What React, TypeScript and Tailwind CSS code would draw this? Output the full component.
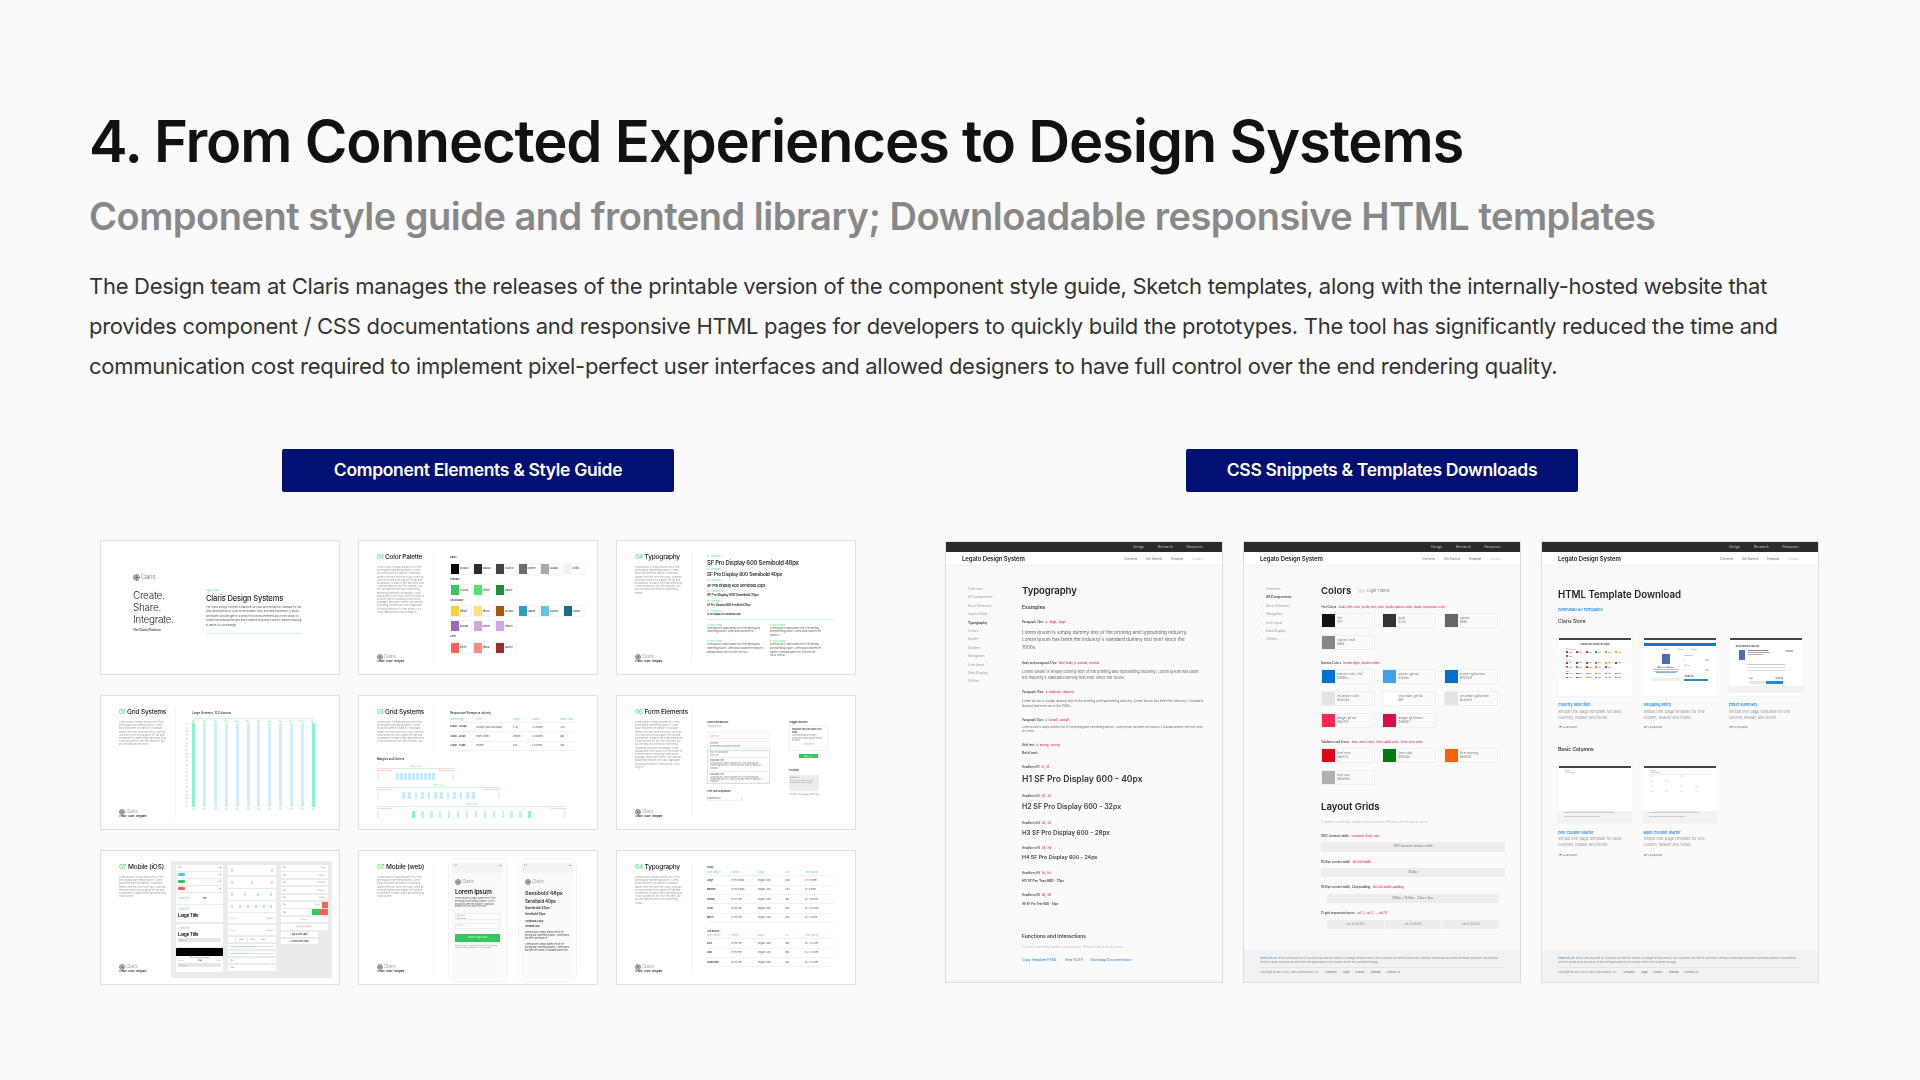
import type { ReactNode } from "react"

const LOREM =
  "Lorem Ipsum is simply dummy text of the printing and typesetting industry. Lorem Ipsum has been the industry's standard dummy text ever since the 1500s, when an unknown printer took a galley of type and scrambled it to make a type specimen book. It has survived not only five centuries, but also the leap into electronic typesetting, remaining essentially unchanged. It was popularised in the 1960s with the release of Letraset sheets containing Lorem Ipsum passages, and more recently with desktop publishing software like Aldus PageMaker including versions of Lorem Ipsum. It is a long established fact that a reader will be distracted by the readable content of a page when looking at its layout."

function ClarisLogo({ large }: { large?: boolean }) {
  return (
    <div className={large ? "flex items-center gap-[1px] text-[5.5px] leading-[7px] font-light text-[#666]" : "flex items-center gap-[1px] text-[4.5px] leading-[6px] font-light text-[#777]"}>
      <svg viewBox="0 0 12 12" className={large ? "w-[7px] h-[7px]" : "w-[6px] h-[6px]"} fill="none" stroke="#555" strokeWidth="1.2">
        <circle cx="6" cy="6" r="5" />
        <path d="M6 1v10M1 6h10M3 2.5c2 2 2 5 0 7M9 2.5c-2 2-2 5 0 7" />
      </svg>
      Claris
    </div>
  )
}

function Rail({ num, title, chars, logo = true, border = true }: { num: string; title: string; chars: number; logo?: boolean; border?: boolean }) {
  return (
    <div className={border ? "w-[75px] shrink-0 h-full flex flex-col pl-[18px] pr-[8px] border-r border-[#f3f3f3]" : "w-[75px] shrink-0 h-full flex flex-col pl-[18px] pr-[8px]"}>
      <div className="mt-[1px] text-[6.5px] leading-[8px] font-medium whitespace-nowrap text-[#222] tracking-[-0.2px]">
        <span className="text-[#5fdc7c]">{num}</span> {title}
      </div>
      <p className="mt-[5px] text-[2.3px] leading-[3.2px] text-[#999]">{LOREM.slice(0, chars)}</p>
      {logo && (
        <div className="mt-auto">
          <ClarisLogo />
          <div className="text-[2.4px] leading-[3px] font-semibold text-[#222]">Create. Share. Integrate.</div>
        </div>
      )}
    </div>
  )
}

function Thumb({ children, className }: { children: ReactNode; className?: string }) {
  return (
    <div className="w-[240px] h-[135px] border border-[#e0e0e0] bg-white overflow-hidden">
      <div className={`h-full blur-[0.35px] ${className ?? "flex py-[11px]"}`}>{children}</div>
    </div>
  )
}

function CoverThumb() {
  return (
    <Thumb className="flex items-start pl-[32px] pt-[33px]">
      <div className="w-[73px] shrink-0">
        <ClarisLogo large />
        <div className="mt-[9px] text-[10px] leading-[11.8px] font-light text-[#222] tracking-[-0.3px]">
          Create.
          <br />
          Share.
          <br />
          Integrate.
        </div>
        <div className="mt-[3px] text-[3px] leading-[4px] font-semibold text-[#333]">The Claris Platform</div>
      </div>
      <div className="w-[96px] mt-[15px]">
        <div className="text-[2.4px] leading-[3px] text-[#5fdc7c]">Light mode</div>
        <div className="mt-[2px] text-[7.6px] leading-[9px] font-medium text-[#222] tracking-[-0.2px] whitespace-nowrap">Claris Design Systems</div>
        <p className="mt-[3px] text-[2.55px] leading-[4.4px] text-[#555]">
          The Claris Design Systems establishes a visual and interaction standard for our web-based products. Built on the modern front-end Web framework, it allows developers and designers to browse functional elements and styles library to create functional prototypes and complete responsive layouts without requiring in-depth CSS knowledge.
        </p>
        <div className="mt-[5px] h-[1px] bg-[#d5f5dd]" />
      </div>
    </Thumb>
  )
}

function Swatches({ colors }: { colors: string[] }) {
  return (
    <div className="flex gap-[0.5px]">
      {colors.map((c, i) => (
        <div key={i} className="w-[22px] h-[12px] flex items-center border border-[#f6f6f6]">
          <div className="w-[8px] h-full shrink-0" style={{ backgroundColor: c }} />
          <span className="ml-[1px] text-[1.9px] font-semibold text-[#444]">{c}</span>
        </div>
      ))}
    </div>
  )
}

function SwatchLabel({ children }: { children: ReactNode }) {
  return <div className="mt-[3px] mb-[3.3px] text-[2.6px] leading-[3px] font-semibold text-[#333]">{children}</div>
}

function ColorThumb() {
  return (
    <Thumb>
      <Rail num="01" title="Color Palette" chars={620} />
      <div className="pl-[16px] pt-[1.5px]">
        <SwatchLabel>Basic</SwatchLabel>
        <Swatches colors={["#000000", "#2b2b2b", "#444444", "#6e6e6e", "#aaaaaa", "#f2f2f6"]} />
        <SwatchLabel>Primary</SwatchLabel>
        <Swatches colors={["#34c759", "#4fe56f", "#1d8f3c"]} />
        <SwatchLabel>Secondary</SwatchLabel>
        <Swatches colors={["#ffd02f", "#ffe27a", "#a35b00", "#2ba0bf", "#5ac8e0", "#1b6a86"]} />
        <div className="mt-[3px]">
          <Swatches colors={["#9a6ab8", "#cfa6e6", "#cfa6e6"]} />
        </div>
        <SwatchLabel>Alert</SwatchLabel>
        <Swatches colors={["#ff5f57", "#ff8a80", "#9b2f2f"]} />
      </div>
    </Thumb>
  )
}

function TypeRow({ label, children, className }: { label: string; children: ReactNode; className: string }) {
  return (
    <div className="mb-[1.6px]">
      <div className="text-[2.2px] leading-[3px] text-[#5fdc7c]">{label}</div>
      <div className={`mt-[0.5px] font-semibold text-[#333] whitespace-nowrap tracking-[-0.2px] ${className}`}>{children}</div>
    </div>
  )
}

function TypographyThumb() {
  return (
    <Thumb>
      <Rail num="04" title="Typography" chars={340} />
      <div className="pl-[15px] pt-[3.5px] w-[150px]">
        <TypeRow label="h1, .headline-1" className="text-[5.9px] leading-[7px]">SF Pro Display 600 Semibold 48px</TypeRow>
        <TypeRow label="h2, .headline-2" className="text-[4.9px] leading-[6.5px]">SF Pro Display 600 Semibold 40px</TypeRow>
        <TypeRow label="h3, .headline-3" className="text-[3.9px] leading-[5.5px]">SF Pro Display 600 Semibold 32px</TypeRow>
        <TypeRow label="h4, .headline-4" className="text-[3.5px] leading-[5px]">SF Pro Display 600 Semibold 28px</TypeRow>
        <TypeRow label="h5, .headline-5" className="text-[3px] leading-[5px]">SF Pro Display 600 Semibold 24px</TypeRow>
        <TypeRow label="h6, .headline-6" className="text-[2.4px] leading-[3.5px]">SF Pro Display 600 Semibold 20px</TypeRow>
        <div className="h-[1px] bg-[#d5f5dd] w-[127px]" />
        <div className="grid grid-cols-[63px_56px] gap-y-[3px] mt-[4px]">
          {[LOREM.slice(0, 100), LOREM.slice(0, 110), LOREM.slice(0, 150), LOREM.slice(0, 160)].map((t, i) => (
            <div key={i} className="pr-[4px]">
              <div className="text-[2px] leading-[3px] text-[#5fdc7c]">p, .body-normal</div>
              <p className="text-[2.1px] leading-[3.6px] text-[#555]">{t}</p>
            </div>
          ))}
        </div>
      </div>
    </Thumb>
  )
}

function GridColumnsThumb() {
  const cols = Array.from({ length: 12 }, (_, i) => i)
  return (
    <Thumb>
      <Rail num="01" title="Grid Systems" chars={320} />
      <div className="pl-[10px] w-[164px]">
        <div className="pl-[6px] pt-[4px] text-[3px] leading-[4px] font-semibold text-[#333]">Large Screens, 12 Columns</div>
        <div className="ml-[6px] mt-[3px] w-[123px] border-t border-[#d5f5dd] h-[2px]" />
        <div className="ml-[6px] w-[123px] flex justify-between text-[1.8px] leading-[3px] text-[#5fdc7c]">
          {cols.map((c) => (
            <span key={c}>54px</span>
          ))}
        </div>
        <div className="flex">
          <div className="w-[6px] flex flex-col justify-between h-[84px] text-[1.7px] text-[#888]">
            {Array.from({ length: 23 }, (_, i) => (
              <span key={i} className="leading-[2px]">32</span>
            ))}
          </div>
          <div className="w-[123px] h-[84px] flex justify-between">
            {cols.map((c) => (
              <div key={c} className={c === 0 || c === 11 ? "w-[3px] h-full bg-[#86f5d3]" : "w-[3px] h-full bg-[#cdefff]"} />
            ))}
          </div>
        </div>
        <div className="ml-[6px] w-[123px] flex justify-between text-[1.8px] leading-[4px] text-[#5fdc7c]">
          {cols.map((c) => (
            <span key={c}>1/12</span>
          ))}
        </div>
      </div>
    </Thumb>
  )
}

function Gutter({ width, side, bars, edge, label }: { width: string; side: string; bars: number; edge?: boolean; label: string }) {
  return (
    <div className={`${width} mt-[3.6px]`}>
      <div className="text-center text-[1.8px] leading-[2.4px] text-[#5fdc7c]">{label}</div>
      <div className="flex h-[1px] mt-[1px]">
        <div className={`${side} bg-[#fcdcdc]`} />
        <div className="flex-1 bg-[#d5f5dd]" />
        <div className={`${side} bg-[#fcdcdc]`} />
      </div>
      <div className="flex justify-between text-[1.7px] leading-[3px] text-[#ff8a80]">
        <span>Responsive margin</span>
        <span>Responsive margin</span>
      </div>
      <div className="flex items-stretch h-[7px] mt-[1px]">
        <div className="w-[2px] bg-[#eeeeee]" />
        <div className={`${side} flex-none`} />
        <div className="flex-1 flex justify-between">
          {Array.from({ length: bars }, (_, i) => (
            <div key={i} className={edge && (i === 0 || i === bars - 1) ? "w-[2.6px] bg-[#86f5d3]" : "w-[2.6px] bg-[#c6ecff]"} />
          ))}
        </div>
        <div className={`${side} flex-none`} />
        <div className="w-[2px] bg-[#eeeeee]" />
      </div>
    </div>
  )
}

function MiniTable({ head, rows, cols }: { head: string[]; rows: string[][]; cols: string }) {
  return (
    <div>
      <div className={`grid ${cols} text-[1.9px] leading-[3px] text-[#5fdc7c] border-b border-[#f3f3f3] pb-[1px]`}>
        {head.map((h) => (
          <span key={h}>{h}</span>
        ))}
      </div>
      {rows.map((r, i) => (
        <div key={i} className={`grid ${cols} items-center h-[9.3px] text-[2px] text-[#555] border-b border-[#f3f3f3]`}>
          {r.map((c, j) => (
            <span key={j} className={j === 0 ? "font-semibold text-[#333] text-[2.2px]" : ""}>{c}</span>
          ))}
        </div>
      ))}
    </div>
  )
}

function GridResponsiveThumb() {
  return (
    <Thumb className="flex flex-col py-[11px]">
      <div className="flex h-[46px] shrink-0">
        <Rail num="01" title="Grid Systems" chars={290} logo={false} />
        <div className="pl-[16px] pt-[4px] w-[164px]">
          <div className="text-[2.8px] leading-[4px] font-semibold text-[#333]">Responsive Viewports (shorti)</div>
          <div className="mt-[3px] w-[127px]">
            <MiniTable
              cols="grid-cols-[26px_37px_19px_28px_1fr]"
              head={["Viewport range", "Screen", "Margins", "Columns", "Gutters / Gaps"]}
              rows={[
                ["980px - 1280px", "Desktop (1366x) and laptop", "32 px", "12 Columns", "24px"],
                ["600px - 979px", "Tablet (Tablet)", "Medium", "12 Columns", "16px"],
                ["320px - 599px", "Handset", "8 px", "6 Columns", "16px"],
              ]}
            />
          </div>
        </div>
      </div>
      <div className="pl-[18px] mt-[4px] text-[2.8px] leading-[4px] font-semibold text-[#333]">Margins and Gutters</div>
      <div className="pl-[18px]">
        <Gutter width="w-[77px]" side="w-[17px]" bars={10} label="1020 px wide" />
        <Gutter width="w-[123px]" side="w-[23px]" bars={12} label="1440 px wide" />
        <Gutter width="w-[189px]" side="w-[33px]" bars={14} edge label="1920 px wide" />
      </div>
    </Thumb>
  )
}

function FormThumb() {
  return (
    <Thumb>
      <Rail num="06" title="Form Elements" chars={590} />
      <div className="pl-[15px] pt-[14px] w-[73px] shrink-0 box-content">
        <div className="w-[63px]">
          <div className="text-[2.6px] leading-[3px] font-semibold text-[#333]">Select dropdown</div>
          <div className="mt-[0.7px] text-[2px] leading-[3px] text-[#5fdc7c]">Component link</div>
          <div className="mt-[4px] h-[7.5px] border border-[#f2f2f2] px-[2px] text-[2px] leading-[6px] text-[#aaa]">Place text</div>
          <div className="mt-[2px] h-[8px] border border-[#f2f2f2] px-[2px] text-[1.9px] leading-[2.6px] text-[#777]">
            Selected
            <br />
            Selected text and option selected
          </div>
          <div className="mt-[1px] h-[34px] border border-[#c4f0cf] px-[1px] text-[1.9px] leading-[2.4px] text-[#888]">
            <div className="border-b border-[#eeeeee] px-[1px] pb-[1px]">Body text dropdown<br />Body Text</div>
            <div className="border-b border-[#eeeeee] px-[1px] py-[1.5px]"><b>Dropdown Title</b><br />{LOREM.slice(0, 120)}</div>
            <div className="px-[1px] py-[1.5px]"><b>Dropdown Title</b><br />{LOREM.slice(0, 120)}</div>
          </div>
          <div className="mt-[5.5px] text-[2.6px] leading-[3px] font-semibold text-[#333]">Text link dropdown</div>
          <div className="mt-[4px] w-[35px] border-b border-[#f2f2f2] text-[2px] leading-[3.5px] text-[#666] flex justify-between">Dropdown link <span>▾</span></div>
        </div>
      </div>
      <div className="pl-[9px] pt-[14px] w-[48px]">
        <div className="text-[2.6px] leading-[3px] font-semibold text-[#333]">Toggle anyone</div>
        <div className="mt-[1px] h-[26px] w-[39px] border border-[#f2f2f2] p-[2px] text-[1.9px] leading-[2.6px] text-[#888]">
          <div className="font-semibold text-[#444]">Dropdown Text Dark above Dark mode</div>
          <p className="mt-[1px]">Lorem ipsum dolor sit amet, consectetur adipiscing elit sed do eiusmod</p>
          <div className="mt-[1px] text-center text-[#5fdc7c]">Learn more</div>
        </div>
        <div className="mt-[3px] ml-[9.5px] w-[19px] h-[4.4px] bg-[#34c759] text-center text-[1.6px] leading-[4.4px] text-white">Add to cart</div>
        <div className="mt-[11px] text-[2.6px] leading-[3px] font-semibold text-[#333]">Tooltips</div>
        <div className="mt-[3px] w-[30px] h-[16px] bg-[#ededed] p-[1px] text-[1.8px] leading-[2.4px] text-[#888]">
          <b>Label text</b>
          <br />
          Lorem ipsum dolor sit amet consectetur adipiscing elit
        </div>
        <div className="mt-[1.5px] flex items-center gap-[1px] text-[1.8px] text-[#777] whitespace-nowrap">
          <div className="w-[2.5px] h-[2.5px] border border-[#ddd]" />SF Pro Text Regular, #333, 10px
        </div>
      </div>
    </Thumb>
  )
}

function IosRow({ left, right, pill, className }: { left: string; right?: string; pill?: string; className?: string }) {
  return (
    <div className={`flex justify-between items-center bg-white px-[2px] text-[1.8px] text-[#777] ${className ?? "h-[5.6px]"}`}>
      {pill ? <span className={`w-[6.5px] h-[3px] rounded-[1px] ${pill}`} /> : <span>{left}</span>}
      <span className="text-[#888]">{right}</span>
    </div>
  )
}

function GreenRow({ marks, h }: { marks: number; h: string }) {
  return (
    <div className={`flex justify-between items-center bg-white px-[3px] ${h}`}>
      {Array.from({ length: marks }, (_, i) => (
        <div key={i} className="w-[2px] h-[2.6px] border-[0.5px] border-[#bdeecb]" />
      ))}
    </div>
  )
}

function MobileIosThumb() {
  return (
    <Thumb className="flex pt-[11px]">
      <div className="h-[111px] shrink-0">
        <Rail num="07" title="Mobile (iOS)" chars={260} border={false} />
      </div>
      <div className="-mt-[1px] h-[117px] w-[161px] ml-[-5px] bg-[#ebebeb] flex gap-[5px] pl-[5px] pt-[4px]">
        <div className="w-[47px] flex flex-col gap-[1.4px]">
          <IosRow left="9:41" right="▪▪ ▮" />
          <IosRow left="" pill="bg-[#5ac8e0]" right="▪▪ ▮" />
          <IosRow left="" pill="bg-[#34c759]" right="▪▪ ▮" />
          <IosRow left="" pill="bg-[#ff5f57]" right="▪▪ ▮" />
          <div className="mt-[0.5px] h-[10.5px] bg-white flex justify-between items-center px-[2px] text-[1.9px] text-[#5fdc7c]">
            <span>‹ Parent Title</span><span className="text-[#333] font-semibold">Title</span><span>+</span>
          </div>
          <div className="h-[17px] bg-white px-[2px] pt-[3px] text-[1.9px] text-[#5fdc7c]">
            <div className="flex justify-between"><span>‹ Parent Title</span><span>+</span></div>
            <div className="mt-[2px] text-[4.4px] leading-[5px] font-bold text-[#222] tracking-[-0.2px]">Large Title</div>
          </div>
          <div className="h-[23px] bg-white px-[2px] pt-[3px] text-[1.9px] text-[#5fdc7c]">
            <div className="flex justify-between"><span>‹ Parent Title</span><span>+</span></div>
            <div className="mt-[2px] text-[4.4px] leading-[5px] font-bold text-[#222] tracking-[-0.2px]">Large Title</div>
            <div className="mt-[1px] h-[4px] bg-[#e6e6e6] text-[1.8px] leading-[4px] text-[#999] pl-[1px]">Q Search</div>
          </div>
          <div className="h-[8px] bg-black rounded-t-[1px]" />
          <div className="-mt-[1.4px] h-[16px] bg-white px-[2px] text-[1.8px] text-[#5fdc7c]">
            <div className="text-center text-[1.6px] leading-[3px] text-[#555]">This is a system message</div>
            <div className="flex justify-between leading-[3px]"><span>Cancel</span><span className="text-[#333] font-semibold">Title</span><span>Done</span></div>
            <div className="mt-[1px] h-[4px] bg-[#e6e6e6] text-[#999] leading-[4px] pl-[1px]">Q Search</div>
          </div>
        </div>
        <div className="w-[47.5px] flex flex-col gap-[1.6px]">
          <GreenRow marks={2} h="h-[10.5px]" />
          <GreenRow marks={3} h="h-[10.5px]" />
          <GreenRow marks={4} h="h-[10.5px]" />
          <GreenRow marks={6} h="h-[10.5px]" />
          <IosRow left="Action 1" right="Action 2" className="h-[10px] !text-[#5fdc7c]" />
          <IosRow left="Action 1" right="Action 3" className="h-[10px] !text-[#5fdc7c]" />
          <div className="h-[5.5px] bg-white flex items-center justify-center text-[1.7px] text-[#555]">
            <span className="px-[3px] border-x border-[#ddd]">Label</span><span className="px-[3px]">Label</span><span className="px-[3px]">Label</span>
          </div>
          <div className="h-[5.5px] bg-white flex items-center px-[2px]"><div className="w-[26px] h-[0.7px] bg-[#a5e8b7]" /><div className="flex-1 h-[0.7px] bg-[#ddd]" /></div>
          <div className="h-[5.5px] bg-white flex items-center px-[2px] gap-[1px]"><div className="w-[20px] h-[0.7px] bg-[#a5e8b7]" /><div className="flex-1 h-[0.7px] bg-[#ddd]" /></div>
          <IosRow left="Title" right="− +" />
          <IosRow left="Field" right="▪" />
        </div>
        <div className="w-[47px] flex flex-col gap-[1.8px]">
          <IosRow left="Title" right="Detail" />
          <IosRow left="Title" right="Detail ›" />
          <IosRow left="Title" right="Detail ○" />
          <IosRow left="Title" right="Detail ✓" />
          <IosRow left="Title" right="Detail ›" />
          <div className="h-[5.6px] flex bg-white items-center pl-[2px] text-[1.8px] text-[#777]">
            <span className="flex-1">Title</span>
            <span className="mr-[2px] text-[#999]">Detail</span>
            <span className="w-[6px] h-full bg-[#ff5f57]" />
          </div>
          <div className="h-[5.6px] flex bg-white items-center pl-[2px] text-[1.8px] text-[#777]">
            <span className="flex-1">Title</span>
            <span className="w-[8px] h-full bg-[#34c759]" />
            <span className="w-[8px] h-full bg-[#ff5f57]" />
          </div>
          <div className="h-[5.6px] bg-white text-center text-[1.8px] leading-[5.6px] text-[#5fdc7c]">Button</div>
          <div className="h-[5.6px] bg-white text-center text-[1.8px] leading-[5.6px] text-[#ff5f57]">Destructive Button</div>
          <div className="h-[5.6px] w-[37px] bg-white text-center text-[1.9px] leading-[5.6px] font-medium text-[#333]">▪ Sign in with Apple</div>
          <div className="h-[5.6px] w-[37px] bg-white text-center text-[1.9px] leading-[5.6px] font-medium text-[#333]">▪ Continue with Apple</div>
        </div>
      </div>
    </Thumb>
  )
}

function Phone({ children }: { children: ReactNode }) {
  return (
    <div className="w-[59px] h-[124px] border border-[#f2f2f2] rounded-[8px] px-[3px] pt-[4px]">
      <div className="bg-[#fafafa] h-[116px]">
        <div className="h-[10px] bg-[#f3f3f3] flex justify-between px-[2px] pt-[1px] text-[1.6px] text-[#888]">
          <span>9:41</span><span>▪▪ ▮</span>
        </div>
        <div className="px-[3px] pt-[6px]">{children}</div>
      </div>
    </div>
  )
}

function MobileWebThumb() {
  return (
    <Thumb className="flex pt-[7px]">
      <div className="pt-[4px] h-[115px] shrink-0">
        <Rail num="07" title="Mobile (web)" chars={260} />
      </div>
      <div className="flex gap-[11px] pl-[14px]">
        <Phone>
          <ClarisLogo />
          <div className="mt-[3px] text-[6.2px] leading-[8px] font-semibold text-[#222] tracking-[-0.2px] whitespace-nowrap">Lorem Ipsum</div>
          <p className="mt-[2px] text-[2.1px] leading-[2.8px] text-[#555]">{LOREM.slice(0, 150)}</p>
          <div className="mt-[4px] h-[6.5px] border border-[#eeeeee] bg-white text-[1.7px] leading-[2.4px] text-[#777] px-[1px]">Label text<br />Placeholder</div>
          <div className="mt-[3px] h-[6.5px] border border-[#eeeeee] bg-white text-[1.7px] leading-[2.4px] text-[#999] px-[1px]">Label text</div>
          <div className="mt-[5px] h-[7.5px] bg-[#34c759] text-center text-[2px] leading-[7.5px] text-[#d8f5df]">Primary Large Button</div>
          <p className="mt-[2px] text-[1.8px] leading-[2.4px] text-[#888]">{LOREM.slice(0, 90)}</p>
        </Phone>
        <Phone>
          <ClarisLogo />
          <div className="mt-[4px] font-semibold text-[#333] whitespace-nowrap tracking-[-0.1px]">
            <div className="text-[5.4px] leading-[8px]">Semibold 48px</div>
            <div className="mt-[1px] text-[4.4px] leading-[7px]">Semibold 40px</div>
            <div className="text-[3.6px] leading-[6.5px]">Semibold 32px</div>
            <div className="text-[3px] leading-[6.5px]">Semibold 28px</div>
            <div className="text-[2.7px] leading-[6px]">Semibold 24px</div>
            <div className="text-[2.2px] leading-[6px]">Semibold 20px</div>
          </div>
          <p className="mt-[1px] text-[2px] leading-[2.8px] text-[#444]">{LOREM.slice(0, 110)}</p>
          <p className="mt-[4px] text-[2px] leading-[2.8px] text-[#444]">{LOREM.slice(0, 130)}</p>
        </Phone>
      </div>
    </Thumb>
  )
}

function TypeTableThumb() {
  const cols = "grid-cols-[24px_27px_27px_20px_1fr]"
  return (
    <Thumb>
      <Rail num="04" title="Typography" chars={340} />
      <div className="pl-[15px] pt-[4.5px] w-[142px]">
        <div className="text-[2.6px] leading-[3px] font-semibold text-[#333]">Body</div>
        <div className="mt-[2px]">
          <MiniTable
            cols={cols}
            head={["Scale Category", "Typeface", "Weight", "Size", "Letter Spacing"]}
            rows={[
              ["Large", "SF Pro Display", "Regular (400)", "20px", "0.1° 0.015em"],
              ["Medium", "SF Pro Display", "Regular (400)", "20px", "0.1° 0.01em"],
              ["Normal", "SF Pro Text", "Regular (400)", "16px", "16 / 1.2px(em)"],
              ["Small", "SF Pro Text", "Regular (400)", "14px", "16 / 1.4(20)em"],
              ["Mirror", "SF Pro Text", "Regular (400)", "12px", "16 / 1.2(8)em"],
            ]}
          />
        </div>
        <div className="mt-[7px] text-[2.6px] leading-[3px] font-semibold text-[#333]">Attributes</div>
        <div className="mt-[1.5px]">
          <MiniTable
            cols={cols}
            head={["Scale Category", "Typeface", "Weight", "Size", "Letter Spacing"]}
            rows={[
              ["Bold", "SF Pro Text", "Regular (400)", "14px", "16 / 1.2(20)em"],
              ["Italic", "SF Pro Text", "Regular (400)", "14px", "16 / 1.2(20)em"],
              ["Underlined", "SF Pro Text", "Regular (400)", "14px", "16 / 1.2(20)em"],
            ]}
          />
        </div>
      </div>
    </Thumb>
  )
}

function ScreenHeader() {
  return (
    <div className="shrink-0 blur-[0.2px]">
      <div className="h-[10.5px] bg-[#2b2b2b] flex justify-end items-center gap-[14px] pr-[19px] text-[3.3px] text-[#ccc]">
        <span>Design</span>
        <span>Research</span>
        <span>Resources</span>
      </div>
      <div className="h-[12.5px] bg-white flex items-center pl-[16px] pr-[19px] shadow-[0_1px_1px_#f3f3f3]">
        <div className="text-[6px] font-semibold text-[#222] whitespace-nowrap tracking-[-0.1px]">Legato Design System</div>
        <div className="ml-auto flex gap-[9px] text-[2.9px] text-[#666]">
          <span>Overview</span>
          <span>Get Started</span>
          <span>Template</span>
          <span className="text-[#bbb]">Contact</span>
        </div>
      </div>
    </div>
  )
}

function SideNav({ items, active, carets, width }: { items: string[]; active: string; carets: string[]; width: string }) {
  return (
    <div className={`${width} shrink-0 pl-[22px] text-[3.3px] leading-[8.4px] text-[#999] blur-[0.2px]`}>
      {items.map((it) => (
        <div key={it} className={it === active ? "relative whitespace-nowrap font-semibold text-[#333]" : "relative whitespace-nowrap"}>
          {carets.includes(it) && <span className="absolute -left-[5px] text-[#bbb]">›</span>}
          {it}
        </div>
      ))}
    </div>
  )
}

function Spec({ label, code, children }: { label: string; code: string; children: ReactNode }) {
  return (
    <div>
      <div className="mt-[9.2px] mb-[4.4px] text-[2.8px] leading-[4px] font-semibold text-[#444] whitespace-nowrap">
        {label} <span className="ml-[1px] text-[#f0306e]">{code}</span>
      </div>
      {children}
    </div>
  )
}

function TypographyScreen() {
  return (
    <Screen>
      <div className="flex flex-1 pt-[20px]">
        <SideNav
          width="w-[76px]"
          active="Typography"
          carets={["Basic Elements", "Navigation", "User Input", "Data Display", "Utilities"]}
          items={["Overview", "All Components", "Basic Elements", "Layout Grids", "Typography", "Colors", "Border", "Dividers", "Navigation", "User Input", "Data Display", "Utilities"]}
        />
        <div className="w-[182px] blur-[0.25px]">
          <div className="text-[9.6px] leading-[12px] font-semibold text-[#222] tracking-[-0.1px]">Typography</div>
          <div className="mt-[7px] text-[5px] leading-[7px] font-semibold text-[#444]">Examples</div>
          <Spec label="Paragraph 21px:" code="p, .large, .large">
            <p className="text-[4.7px] leading-[7.7px] text-[#666] whitespace-nowrap">
              Lorem Ipsum is simply dummy text of the printing and typesetting industry.
              <br />
              Lorem Ipsum has been the industry's standard dummy text ever since the
              <br />
              1500s.
            </p>
          </Spec>
          <Spec label="Body and paragraph 17px:" code="html, body, p .normal, .normal">
            <p className="text-[3.82px] leading-[6px] text-[#666]">Lorem Ipsum is simply dummy text of the printing and typesetting industry. Lorem Ipsum has been the industry's standard dummy text ever since the 1500s.</p>
          </Spec>
          <Spec label="Paragraph 14px:" code="p .reduced, .reduced">
            <p className="text-[3.15px] leading-[5px] text-[#666]">Lorem Ipsum is simply dummy text of the printing and typesetting industry. Lorem Ipsum has been the industry's standard dummy text ever since the 1500s.</p>
          </Spec>
          <Spec label="Paragraph 12px:" code="p .xsmall, .xsmall">
            <p className="text-[2.65px] leading-[3.6px] text-[#666]">Lorem Ipsum is simply dummy text of the printing and typesetting industry. Lorem Ipsum has been the industry's standard dummy text ever since the 1500s.</p>
          </Spec>
          <Spec label="Bold text:" code="b, strong, .strong">
            <div className="text-[3.6px] leading-[5px] font-semibold text-[#555]">Bold text.</div>
          </Spec>
          <Spec label="Headlines H1" code="h1, .h1">
            <div className="text-[8.6px] leading-[11px] font-semibold text-[#333] whitespace-nowrap">H1 SF Pro Display 600 - 40px</div>
          </Spec>
          <Spec label="Headlines H2" code="h2, .h2">
            <div className="text-[7px] leading-[9px] font-semibold text-[#444] whitespace-nowrap">H2 SF Pro Display 600 - 32px</div>
          </Spec>
          <Spec label="Headlines H3" code="h3, .h3">
            <div className="text-[6.2px] leading-[8px] font-semibold text-[#444] whitespace-nowrap">H3 SF Pro Display 600 - 28px</div>
          </Spec>
          <Spec label="Headlines H4" code="h4, .h4">
            <div className="text-[5.3px] leading-[7px] font-semibold text-[#444] whitespace-nowrap">H4 SF Pro Display 600 - 24px</div>
          </Spec>
          <Spec label="Headlines H5" code="h5, .h5">
            <div className="text-[3.4px] leading-[5px] font-semibold text-[#444] whitespace-nowrap">H5 SF Pro Text 600 - 17px</div>
          </Spec>
          <Spec label="Headlines H6" code="h6, .h6">
            <div className="text-[2.9px] leading-[4px] font-semibold text-[#444] whitespace-nowrap">H6 SF Pro Text 600 - 14px</div>
          </Spec>
          <div className="mt-[27px] text-[5px] leading-[7px] font-semibold text-[#444]">Functions and Interactions</div>
          <div className="mt-[5px] text-[3.4px] leading-[5px] text-[#bbb]">Content currently under construction. Please check back soon.</div>
          <div className="mt-[8.7px] flex gap-[8px] text-[3.4px] leading-[5px] text-[#0f79d6] whitespace-nowrap">
            <span>Copy Template HTML</span>
            <span>View SCSS</span>
            <span>Bootstrap Documentation</span>
          </div>
        </div>
      </div>
    </Screen>
  )
}

function Tile({ color, name, hex }: { color: string; name: string; hex: string }) {
  return (
    <div className="w-[54px] h-[15.4px] flex border border-[#f0f0f0]">
      <div className="w-[13px] h-full shrink-0" style={{ backgroundColor: color }} />
      <div className="pl-[2px] pt-[2px] text-[2.9px] leading-[4.6px] text-[#777] whitespace-nowrap">
        {name}
        <br />
        {hex}
      </div>
    </div>
  )
}

function TileLabel({ label, code }: { label: string; code: string }) {
  return (
    <div className="text-[2.8px] leading-[4px] font-semibold text-[#444] whitespace-nowrap">
      {label} <span className="ml-[1px] text-[#f0306e]">{code}</span>
    </div>
  )
}

function GridBar({ children, className }: { children: ReactNode; className: string }) {
  return <div className={`mt-[4.5px] h-[9.3px] bg-[#ededed] text-center text-[2.8px] leading-[9.3px] text-[#777] ${className}`}>{children}</div>
}

function ColorsScreen() {
  const tiles = "grid grid-cols-[54px_54px_54px] gap-x-[7.4px] gap-y-[6.6px] mt-[3.7px]"
  return (
    <Screen footer>
      <div className="flex flex-1 pt-[20px]">
        <SideNav
          width="w-[77px]"
          active="All Components"
          carets={["Basic Elements", "Navigation", "User Input", "Data Display", "Utilities"]}
          items={["Overview", "All Components", "Basic Elements", "Navigation", "User Input", "Data Display", "Utilities"]}
        />
        <div className="w-[184px] blur-[0.25px]">
          <div className="flex items-center">
            <span className="text-[9.6px] leading-[12px] font-semibold text-[#222]">Colors</span>
            <span className="ml-[7px] w-[7px] h-[3.5px] rounded-full bg-[#e6e6e6]" />
            <span className="ml-[2px] text-[3.8px] text-[#777]">Light Theme</span>
          </div>
          <div className="mt-[8px]"><TileLabel label="Text Colors" code=".body-title-color, .body-text-color, .body-caption-color, .body-captionsm-color" /></div>
          <div className={tiles}>
            <Tile color="#111111" name="title" hex="#111" />
            <Tile color="#333333" name="body" hex="#333" />
            <Tile color="#666666" name="caption" hex="#666" />
            <Tile color="#888888" name="caption small" hex="#888" />
          </div>
          <div className="mt-[10.9px]"><TileLabel label="Buttons Colors" code=".border-light, .border-white" /></div>
          <div className={tiles}>
            <Tile color="#0070d2" name="primary color / link" hex="#0066cc" />
            <Tile color="#42a1ec" name="primary gd top" hex="#42a1ec" />
            <Tile color="#0070c9" name="primary gd bottom" hex="#0070c9" />
            <Tile color="#e3e3e3" name="secondary color" hex="#e3e3e3" />
            <Tile color="#ffffff" name="secondary gd top" hex="#fff" />
            <Tile color="#e3e3e3" name="secondary gd bottom" hex="#e3e3e3" />
            <Tile color="#fb2855" name="danger gd top" hex="#fb2755" />
            <Tile color="#d60f47" name="danger gd bottom" hex="#d60f47" />
          </div>
          <div className="mt-[12.2px]"><TileLabel label="Validation and Errors" code=".form-error-color, .form-valid-color, .form-icon-color" /></div>
          <div className={tiles}>
            <Tile color="#de071c" name="form error" hex="#de071c" />
            <Tile color="#007a0c" name="form valid" hex="#007a0c" />
            <Tile color="#f56300" name="form warning" hex="#ef6002" />
            <Tile color="#b0b0b0" name="form icon" hex="#b0b0b0" />
          </div>
          <div className="mt-[15.6px] text-[9.6px] leading-[12px] font-semibold text-[#222]">Layout Grids</div>
          <div className="mt-[7.2px] text-[3.6px] leading-[5px] text-[#bbb]">Content currently under construction. Please check back soon.</div>
          <div className="mt-[8.8px]"><TileLabel label="100% browser width" code=".container-fluid, .row" /></div>
          <GridBar className="">100% browser viewport width</GridBar>
          <div className="mt-[8px]"><TileLabel label="1034px content width" code=".lim-full-width" /></div>
          <GridBar className="">1034px</GridBar>
          <div className="mt-[8px]"><TileLabel label="1034px content width, 22px padding" code=".lim-full-width-padding" /></div>
          <GridBar className="mx-[6px]">990px = 1034px - (22px x 2px)</GridBar>
          <div className="mt-[8px]"><TileLabel label="12 grid responsive layout" code=".col-1, .col-2, ... .col-12" /></div>
          <div className="mt-[4.5px] mx-[6px] grid grid-cols-3 gap-[1px] text-center text-[2.8px] leading-[9.3px] text-[#777]">
            <div className="bg-[#ededed]">.col-4 (33.3%)</div>
            <div className="bg-[#ededed]">.col-4 (33.3%)</div>
            <div className="bg-[#ededed]">.col-4 (33.3%)</div>
          </div>
        </div>
      </div>
    </Screen>
  )
}

function CardFrame({ children }: { children: ReactNode }) {
  return (
    <div className="w-[74px] h-[58.5px] bg-white shadow-[0_0_1px_#ddd] overflow-hidden">
      <div className="h-[2px] mx-[1px] mt-[1px] bg-[#444]" />
      {children}
    </div>
  )
}

function Dots({ colors }: { colors: string[] }) {
  return (
    <div className="grid grid-cols-6 gap-x-[1px] gap-y-[2.5px] px-[8px]">
      {colors.map((c, i) => (
        <div key={i} className="flex items-center gap-[0.5px]">
          <span className="w-[2px] h-[1.6px]" style={{ backgroundColor: c }} />
          <span className="w-[3.5px] h-[0.7px] bg-[#bbb]" />
        </div>
      ))}
    </div>
  )
}

function CountryPreview() {
  return (
    <CardFrame>
      <div className="mt-[3px] text-center text-[2px] leading-[3px] font-semibold text-[#333]">Choose your country or region</div>
      <div className="mt-[2px] px-[8px] text-[1.5px] leading-[3px] text-[#777]">The Americas</div>
      <Dots colors={["#e25", "#e25", "#d33", "#2a6", "#f80", "#fa0", "#2a4"]} />
      <div className="mt-[2px] px-[8px] text-[1.5px] leading-[3px] text-[#777]">Europe</div>
      <Dots colors={["#e25", "#d33", "#d33", "#e55", "#fa0", "#e25", "#e55", "#39d", "#d33", "#f80", "#e25"]} />
      <div className="mt-[2px] px-[8px] text-[1.5px] leading-[3px] text-[#777]">Asia</div>
      <Dots colors={["#2a4", "#e25", "#39d", "#f80", "#39d", "#39d", "#e25", "#d33", "#f80", "#39d", "#fa0", "#e55"]} />
    </CardFrame>
  )
}

function ShoppingPreview() {
  return (
    <CardFrame>
      <div className="mx-[1px] mt-[3px] h-[3px] bg-[#0f79d6]" />
      <div className="mt-[3px] flex justify-center gap-[8px] text-[1.5px] text-[#666]"><span>Delivery</span><span>Payment</span><span>Review</span></div>
      <div className="flex mt-[2px] px-[6px]">
        <div className="w-[33px] flex flex-col items-center">
          <div className="w-[8px] h-[10px] bg-[#4a6fb0]" />
          <div className="mt-[2px] text-[1.6px] font-semibold text-[#333]">Welcome to Checkout</div>
          <div className="mt-[1px] h-[0.7px] w-[26px] bg-[#bbb]" />
          <div className="mt-[1px] h-[0.7px] w-[24px] bg-[#bbb]" />
          <div className="mt-[1px] h-[0.7px] w-[20px] bg-[#7fb5ea]" />
          <div className="mt-[5px] h-[3px] w-[28px] bg-[#eeeeee]" />
        </div>
        <div className="w-[26px] pl-[2px] text-[1.5px] leading-[3px] text-[#666]">
          <div>Subscription</div>
          <div className="flex justify-between mt-[2px]"><span>1</span><span>$149</span></div>
          <div className="mt-[2px]">Add-on</div>
          <div className="flex justify-between mt-[2px]"><span>2</span><span>$98</span></div>
          <div className="mt-[3px] text-[2px] font-semibold text-[#333]">$1,199.00</div>
          <div className="mt-[1px] h-[2px] bg-[#1d8be0]" />
        </div>
      </div>
    </CardFrame>
  )
}

function OrderPreview() {
  return (
    <CardFrame>
      <div className="mt-[5px] px-[7px] text-[2px] leading-[3px] font-semibold text-[#333]">Need a bank in your cart</div>
      <div className="flex mt-[2px] px-[10px] gap-[3px]">
        <div className="w-[6px] h-[10px] bg-[#4a6fb0]" />
        <div className="flex-1">
          <div className="h-[0.8px] w-[20px] bg-[#888]" />
          <div className="mt-[1px] h-[0.8px] w-[22px] bg-[#aaa]" />
          <div className="mt-[1px] h-[0.8px] w-[14px] bg-[#aaa]" />
        </div>
        <div className="text-[1.6px] font-semibold text-[#333]">$1,199.00</div>
      </div>
      <div className="mt-[4px] mx-[18px] h-[0.8px] bg-[#ccc]" />
      <div className="mt-[2px] mx-[18px] h-[0.8px] bg-[#ddd]" />
      <div className="mt-[2px] mx-[18px] h-[0.8px] bg-[#ddd]" />
      <div className="mt-[6px] flex justify-between mx-[20px] text-[1.6px] font-semibold text-[#333]"><span>Total</span><span>$1,199.00</span></div>
      <div className="mt-[2px] flex gap-[1px] px-[20px]"><div className="flex-1 h-[2.5px] bg-[#e6e6e6]" /><div className="flex-1 h-[2.5px] bg-[#1d8be0]" /></div>
      <div className="mt-[2px] h-[7px] bg-[#f2f2f2]" />
    </CardFrame>
  )
}

function StarterPreview({ multi }: { multi?: boolean }) {
  return (
    <CardFrame>
      <div className="flex flex-col h-[55px]">
        <div className="mt-[1px] px-[7px] text-[1.6px] leading-[2.4px] text-[#888]">Header<br />Subheading</div>
        {multi && (
          <div className="mt-[1px] mx-[7px] grid grid-cols-4 gap-y-[3px] text-[1.4px] text-[#888] border-t border-[#eeeeee] pt-[1px]">
            {["Col", "", "Col", "", "Col", "Col", "", "", "Col", "", "Col", "Col", "Col", "Col", "Col", "Col"].map((c, i) => (
              <span key={i} className="leading-[2px]">{c}</span>
            ))}
          </div>
        )}
        <div className="mt-auto h-[12px] bg-[#f2f2f2] px-[6px] pt-[1.5px]">
          <div className="h-[0.7px] w-[50px] bg-[#ccc]" />
          <div className="mt-[3px] h-[0.7px] w-[36px] bg-[#ccc]" />
        </div>
      </div>
    </CardFrame>
  )
}

function TemplateCard({ title, desc, children }: { title: string; desc: string; children: ReactNode }) {
  return (
    <div className="w-[74px]">
      {children}
      <div className="mt-[6.4px] text-[3.8px] leading-[5px] font-medium text-[#0f79d6] whitespace-nowrap">{title}</div>
      <p className="mt-[1.5px] w-[72px] text-[3.8px] leading-[6px] text-[#999]">{desc}</p>
      <div className="mt-[4.6px] text-[2.6px] leading-[4px] text-[#555]">Ver.1 2/28/2019</div>
    </div>
  )
}

function TemplatesScreen() {
  return (
    <Screen footer>
      <div className="flex-1 pl-[16px] pt-[24.3px] blur-[0.25px]">
        <div className="text-[9.7px] leading-[12px] font-semibold text-[#222] whitespace-nowrap">HTML Template Download</div>
        <div className="mt-[5.9px] text-[3.9px] leading-[5px] font-medium text-[#0f79d6]">Download All Templates</div>
        <div className="mt-[6.3px] text-[5px] leading-[7px] font-medium text-[#333]">Claris Store</div>
        <div className="mt-[11.8px] flex gap-[11.4px]">
          <TemplateCard title="Country Selection" desc="Simple one-page template for basic columns, header and footer."><CountryPreview /></TemplateCard>
          <TemplateCard title="Shopping Entry" desc="Simple one-page template for one column, header and footer."><ShoppingPreview /></TemplateCard>
          <TemplateCard title="Order Summary" desc="Simple one-page template for one column, header and footer."><OrderPreview /></TemplateCard>
        </div>
        <div className="mt-[16.9px] text-[5px] leading-[7px] font-semibold text-[#333]">Basic Columns</div>
        <div className="mt-[11.5px] flex gap-[11.4px]">
          <TemplateCard title="One Column Starter" desc="Simple one-page template for basic columns, header and footer."><StarterPreview /></TemplateCard>
          <TemplateCard title="Multi Column Starter" desc="Simple one-page template for one column, header and footer."><StarterPreview multi /></TemplateCard>
        </div>
      </div>
    </Screen>
  )
}

function Screen({ children, footer }: { children: ReactNode; footer?: boolean }) {
  return (
    <div className="w-[278px] h-[442px] border border-[#dddddd] bg-[#fafafa] flex flex-col overflow-hidden">
      <ScreenHeader />
      {children}
      {footer ? (
        <div className="h-[32px] shrink-0 bg-[#f2f2f2] px-[16px] pt-[7px] text-[2.6px] leading-[3.9px] text-[#888] blur-[0.25px]">
          <p className="pb-[2px] border-b border-[#e4e4e4]">
            <span className="text-[#0f79d6]">Terms of Use.</span> Prices are exclusive of VAT/sales tax and are subject to change without notice. The VAT/sales tax rate for Electronic Software Downloads and other FileMaker products classified as services under local law will be at the rate applicable to the country where the customer belongs.
          </p>
          <div className="mt-[3px] flex gap-[6px] whitespace-nowrap">
            <span>Copyright © 1994-2019, Claris International, Inc.</span>
            <span className="text-[#666]">Company</span>
            <span className="text-[#666]">Legal</span>
            <span className="text-[#666]">Privacy</span>
            <span className="text-[#666]">Sitemap</span>
            <span className="text-[#666]">Contact Us</span>
          </div>
        </div>
      ) : (
        <div className="h-[2px] shrink-0 bg-[#f2f2f2]" />
      )}
    </div>
  )
}

function ActionButton({ children }: { children: ReactNode }) {
  return (
    <div className="w-[392px] h-[43px] mx-auto flex items-center justify-center rounded-[2px] bg-[#021073] text-[17.5px] font-semibold text-white tracking-[-0.33px]">
      {children}
    </div>
  )
}

export default function App() {
  return (
    <div className="w-[1920px] h-[1080px] overflow-hidden bg-[#fafafa] pl-[89px] pt-[103px] [font-family:Inter,sans-serif]">
      <h1 className="text-[58px] leading-[76px] font-semibold text-[#111] tracking-[-1.2px] whitespace-nowrap">
        4. From Connected Experiences to Design Systems
      </h1>
      <h2 className="mt-[10.5px] text-[38px] leading-[52px] font-semibold text-[#888] tracking-[-0.5px] whitespace-nowrap">
        Component style guide and frontend library; Downloadable responsive HTML templates
      </h2>
      <div className="mt-[24.8px] text-[22px] leading-[40px] text-[#333] tracking-[-0.28px] whitespace-nowrap">
        The Design team at Claris manages the releases of the printable version of the component style guide, Sketch templates, along with the internally-hosted website that
        <br />
        provides component / CSS documentations and responsive HTML pages for developers to quickly build the prototypes. The tool has significantly reduced the time and
        <br />
        communication cost required to implement pixel-perfect user interfaces and allowed designers to have full control over the end rendering quality.
      </div>
      <div className="mt-[62.7px] ml-[11px] flex gap-[89px]">
        <div className="w-[756px]">
          <ActionButton>Component Elements &amp; Style Guide</ActionButton>
          <div className="mt-[48px] grid grid-cols-[240px_240px_240px] gap-x-[18px] gap-y-[20px]">
            <CoverThumb />
            <ColorThumb />
            <TypographyThumb />
            <GridColumnsThumb />
            <GridResponsiveThumb />
            <FormThumb />
            <MobileIosThumb />
            <MobileWebThumb />
            <TypeTableThumb />
          </div>
        </div>
        <div className="w-[874px]">
          <ActionButton>CSS Snippets &amp; Templates Downloads</ActionButton>
          <div className="mt-[49px] flex gap-[20px]">
            <TypographyScreen />
            <ColorsScreen />
            <TemplatesScreen />
          </div>
        </div>
      </div>
    </div>
  )
}
